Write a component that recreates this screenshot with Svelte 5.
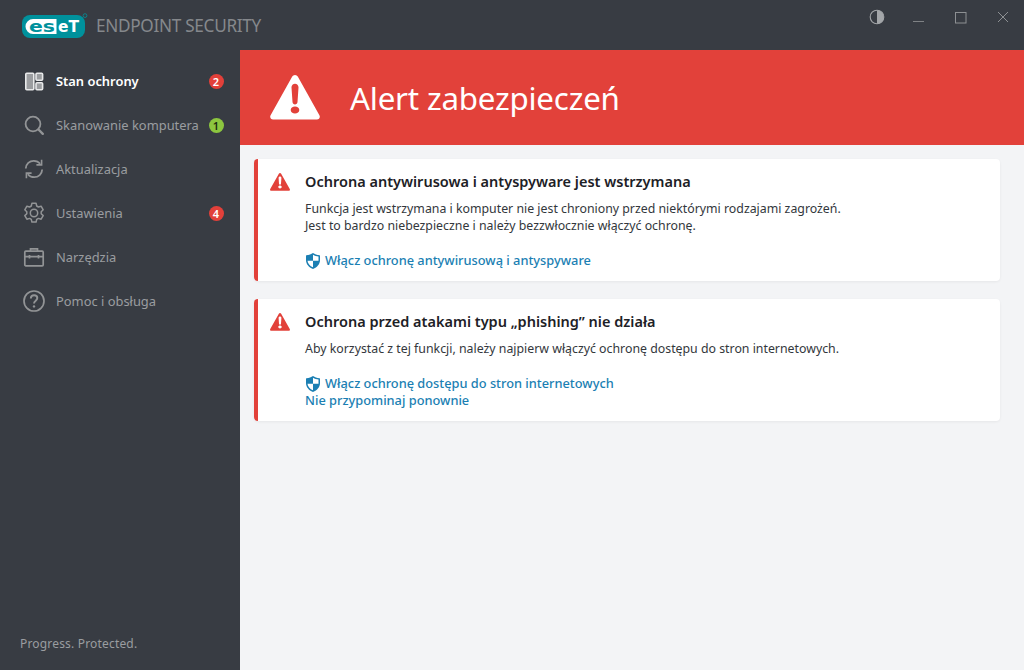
<script>
  const nav = [
    { label: 'Stan ochrony', icon: 'status', active: true, badge: '2', tone: 'red' },
    { label: 'Skanowanie komputera', icon: 'scan', badge: '1', tone: 'green' },
    { label: 'Aktualizacja', icon: 'update' },
    { label: 'Ustawienia', icon: 'gear', badge: '4', tone: 'red' },
    { label: 'Narzędzia', icon: 'tools' },
    { label: 'Pomoc i obsługa', icon: 'help' }
  ];

  const alerts = [
    {
      title: 'Ochrona antywirusowa i antyspyware jest wstrzymana',
      lines: [
        'Funkcja jest wstrzymana i komputer nie jest chroniony przed niektórymi rodzajami zagrożeń.',
        'Jest to bardzo niebezpieczne i należy bezzwłocznie włączyć ochronę.'
      ],
      action: 'Włącz ochronę antywirusową i antyspyware'
    },
    {
      title: 'Ochrona przed atakami typu „phishing” nie działa',
      lines: ['Aby korzystać z tej funkcji, należy najpierw włączyć ochronę dostępu do stron internetowych.'],
      action: 'Włącz ochronę dostępu do stron internetowych',
      extra: 'Nie przypominaj ponownie'
    }
  ];
</script>

{#snippet warning(size)}
  <svg class="warn" width={size} height={size * 0.9} viewBox="0 0 50 45" aria-hidden="true">
    <path fill="currentColor" fill-rule="evenodd" d="M25 0c1.200 0 2.200.7 2.900 1.800L49.400 40.200c1.100 2.100-.1 4.300-2.500 4.300H3.100C.7 44.500-.5 42.300.6 40.200L22.100 1.800C22.800.7 23.800 0 25 0zM21.500 12.500c-.1-2.200 1.500-3.800 3.500-3.800s3.600 1.600 3.500 3.800l-1 14.500c-.1 1.500-1.100 2.500-2.500 2.500s-2.400-1-2.500-2.500zM25 31.500c2.400 0 4.300 1.500 4.300 3.500s-1.900 3.500-4.300 3.500-4.300-1.500-4.300-3.500 1.900-3.500 4.300-3.500z"/>
  </svg>
{/snippet}

{#snippet shield()}
  <svg class="shield" width="14" height="16" viewBox="0 0 14 16" aria-hidden="true">
    <path fill="#1b7fb3" d="M7 0c1.800 1.300 3.900 2 6.500 2.200.4 0 .5.200.5.500v4.300c0 4-2.700 7.300-7 9-4.300-1.700-7-5-7-9V2.700c0-.3.100-.5.500-.5C3.100 2 5.200 1.300 7 0z"/>
    <path fill="#fff" d="M7 1.700c1.700 1 3.600 1.500 5.500 1.700v4.300H7zM7 7.700v6.600c-3.100-1.400-5.300-3.700-5.500-6.600z"/>
  </svg>
{/snippet}

<div class="window">
  <div class="titlebar">
    <svg class="logo" width="66" height="26" viewBox="0 0 66 26" aria-label="ESET">
      <rect x="0" y="2" width="63" height="23" rx="8" fill="#00919c"/>
      <path d="M11 6h23.500v15H11a7.500 7.500 0 0 1 0-15z" fill="#fff"/>
      <text class="logo-es" x="7" y="18.600" textLength="26" lengthAdjust="spacingAndGlyphs">es</text>
      <text class="logo-et" x="36" y="18.600" textLength="21" lengthAdjust="spacingAndGlyphs">eT</text>
      <circle cx="63" cy="2.600" r="1.900" fill="none" stroke="#00919c" stroke-width=".8"/>
    </svg>
    <span class="product">ENDPOINT SECURITY</span>

    <div class="controls">
      <svg width="16" height="16" viewBox="0 0 16 16">
        <circle cx="8" cy="8" r="6.800" fill="none" stroke="#a3a6a9" stroke-width="1.100"/>
        <path d="M8 1.200a6.800 6.800 0 0 1 0 13.600z" fill="#a3a6a9"/>
      </svg>
      <svg class="min" width="12" height="12" viewBox="0 0 12 12"><path d="M0 10.500h11" stroke="#7f8285" fill="none"/></svg>
      <svg class="max" width="12" height="12" viewBox="0 0 12 12"><rect x=".5" y=".5" width="10.500" height="10.500" stroke="#8d9093" fill="none"/></svg>
      <svg class="close" width="12" height="12" viewBox="0 0 12 12"><path d="M1 1l10 10M11 1L1 11" stroke="#8d9093" fill="none"/></svg>
    </div>
  </div>

  <div class="content">
    <aside class="sidebar">
      <nav class="menu">
        {#each nav as item}
          <div class="item" class:active={item.active}>
            <span class="icon">
              {#if item.icon === 'status'}
                <svg width="22" height="22" viewBox="0 0 22 22" fill="none" stroke="currentColor" stroke-width="1.600">
                  <rect x="2.800" y="3.300" width="8" height="16.400" rx="1" fill="#9b9da0"/>
                  <rect x="13" y="3.300" width="6.600" height="7" rx="1" fill="#9b9da0"/>
                  <rect x="13" y="12.800" width="6.600" height="6.900" rx="1" fill="#9b9da0"/>
                </svg>
              {:else if item.icon === 'scan'}
                <svg width="22" height="22" viewBox="0 0 22 22" fill="none" stroke="currentColor" stroke-width="1.800" stroke-linecap="round">
                  <circle cx="10" cy="10" r="7.400"/>
                  <path d="M15.500 15.500l4.300 4.300" stroke-width="2.400"/>
                </svg>
              {:else if item.icon === 'update'}
                <svg width="22" height="22" viewBox="0 0 22 22" fill="none" stroke="currentColor" stroke-width="1.800">
                  <path d="M2.800 10.500C3 6 6.500 2.800 10.800 2.800c2.700 0 4.900 1.100 6.400 3"/>
                  <path d="M19.200 11.500c-.2 4.500-3.700 7.700-8 7.700-2.700 0-4.900-1.100-6.400-3"/>
                  <path d="M18.600 1.700v5.200h-5.200M3.400 20.300v-5.200h5.200" stroke-width="1.600"/>
                </svg>
              {:else if item.icon === 'gear'}
                <svg width="22" height="22" viewBox="0 0 22 22" fill="none" stroke="currentColor" stroke-width="1.500" stroke-linejoin="round">
                  <path d="M8.900 1.300h4.200l.6 2.700 1.700 1 2.700-.8 2.100 3.600-2 1.900v2l2 1.900-2.100 3.600-2.700-.8-1.700 1-.6 2.700H8.900l-.6-2.700-1.700-1-2.700.8-2.100-3.600 2-1.900v-2l-2-1.900 2.100-3.600 2.700.8 1.700-1z"/>
                  <circle cx="11" cy="11" r="3.700"/>
                </svg>
              {:else if item.icon === 'tools'}
                <svg width="22" height="22" viewBox="0 0 22 22" fill="none" stroke="currentColor" stroke-width="1.700">
                  <rect x="1.800" y="5.200" width="18.400" height="14.600" rx="1"/>
                  <path d="M1.800 10.700h18.400M7.500 5V2.800h7V5M6.500 9v3.500M15.500 9v3.500"/>
                </svg>
              {:else}
                <svg class="help" width="24" height="24" viewBox="0 0 24 24" fill="none" stroke="currentColor" stroke-width="1.700">
                  <circle cx="12" cy="12" r="10"/>
                  <path d="M8.800 9.500c.1-2 1.500-3.200 3.300-3.200 1.900 0 3.200 1.200 3.200 2.800 0 2.600-3.300 2.500-3.300 5.300" stroke-width="1.900"/>
                  <circle cx="12" cy="17.400" r="1.200" fill="currentColor" stroke="none"/>
                </svg>
              {/if}
            </span>
            <span class="label">{item.label}</span>
            {#if item.badge}
              <span class="badge {item.tone}">{item.badge}</span>
            {/if}
          </div>
        {/each}
      </nav>

      <div class="slogan">Progress. Protected.</div>
    </aside>

    <main class="main">
      <header class="alert-head">
        {@render warning(50)}
        <h1>Alert zabezpieczeń</h1>
      </header>

      <section class="cards">
        {#each alerts as alert}
          <article class="card">
            <span class="card-icon">{@render warning(20)}</span>
            <div class="card-body">
              <h2>{alert.title}</h2>
              <div class="text">
                {#each alert.lines as line}
                  <p>{line}</p>
                {/each}
              </div>
              <div class="links">
                <div class="action">{@render shield()}<span>{alert.action}</span></div>
                {#if alert.extra}
                  <div class="extra">{alert.extra}</div>
                {/if}
              </div>
            </div>
          </article>
        {/each}
      </section>
    </main>
  </div>
</div>

<style>
  :global(body) {
    margin: 0;
    background: #f3f4f6;
  }

  .window {
    display: flex;
    flex-direction: column;
    width: 1024px;
    height: 670px;
    overflow: hidden;
    font-family: "Noto Sans", "Open Sans", sans-serif;
    background: #f3f4f6;
  }

  /* Title bar */
  .titlebar {
    height: 50px;
    flex: none;
    box-sizing: border-box;
    display: flex;
    align-items: flex-start;
    padding-left: 22px;
    background: #383c43;
  }

  .logo {
    flex: none;
    margin-top: 13px;
  }

  .logo-es,
  .logo-et {
    font-family: "DejaVu Sans", sans-serif;
    font-weight: 700;
    font-size: 16px;
  }

  .logo-es { fill: #00919c; }
  .logo-et { fill: #fff; }

  .product {
    margin: 15px 0 0 8px;
    font-size: 17.200px;
    line-height: 22px;
    letter-spacing: -0.3px;
    color: #85888c;
    white-space: nowrap;
  }

  .controls {
    margin-left: auto;
    display: flex;
    align-items: flex-start;
    padding: 9px 15px 0 0;
  }

  .min { margin: 2px 0 0 28px; }
  .max { margin: 3px 0 0 30px; }
  .close { margin: 2px 0 0 30px; }

  .content {
    flex: 1;
    display: flex;
    min-height: 0;
  }

  /* Sidebar */
  .sidebar {
    width: 240px;
    flex: none;
    display: flex;
    flex-direction: column;
    background: #383c43;
  }

  .menu {
    display: flex;
    flex-direction: column;
    padding-top: 9px;
  }

  .item {
    height: 44px;
    display: flex;
    align-items: center;
    padding: 0 16.500px 0 23px;
    color: #9a9da0;
    font-size: 12.900px;
  }

  .item.active {
    color: #fff;
    font-weight: 600;
  }

  .icon {
    width: 33px;
    flex: none;
    display: flex;
    color: #929496;
  }

  .active .icon { color: #e8e9ea; }

  .help { margin-left: -1px; }

  .label {
    flex: 1;
    white-space: nowrap;
  }

  .badge {
    width: 15px;
    height: 15px;
    border-radius: 50%;
    display: flex;
    align-items: center;
    justify-content: center;
    font-size: 11px;
    font-weight: 600;
  }

  .badge.red { background: #e2403a; color: #fff; }
  .badge.green { background: #8cc63f; color: #1d2a10; }

  .slogan {
    margin-top: auto;
    padding: 0 0 18px 20px;
    font-size: 12px;
    letter-spacing: 0.18px;
    color: #9a9da0;
  }

  /* Main column */
  .main {
    flex: 1;
    min-width: 0;
  }

  .alert-head {
    height: 95px;
    display: flex;
    align-items: center;
    padding-left: 30px;
    gap: 30px;
    background: #e2413a;
    color: #fff;
  }

  .warn { display: block; }

  h1 {
    margin: 0;
    font-size: 31.300px;
    font-weight: 400;
    letter-spacing: -0.2px;
  }

  .cards {
    display: flex;
    flex-direction: column;
    gap: 18px;
    padding: 14px 24px 0 14px;
  }

  .card {
    display: flex;
    background: #fff;
    border-left: 4px solid #e2413a;
    border-radius: 4px;
    box-shadow: 0 1px 3px rgba(0, 0, 0, 0.06);
    padding: 12px;
    color: #e2413a;
  }

  .card-icon {
    width: 35px;
    flex: none;
    padding-top: 2px;
  }

  h2 {
    margin: 0 0 9px;
    font-size: 14.500px;
    line-height: 20px;
    font-weight: 600;
    color: #1d2126;
  }

  .text {
    font-size: 12.340px;
    line-height: 17px;
    color: #33373c;
  }

  p { margin: 0; }

  .links {
    margin-top: 18px;
    font-size: 12.800px;
    line-height: 17px;
    font-weight: 500;
    color: #1b7fb3;
  }

  .action {
    display: flex;
    align-items: center;
    gap: 5px;
    margin-left: 1px;
  }
</style>
